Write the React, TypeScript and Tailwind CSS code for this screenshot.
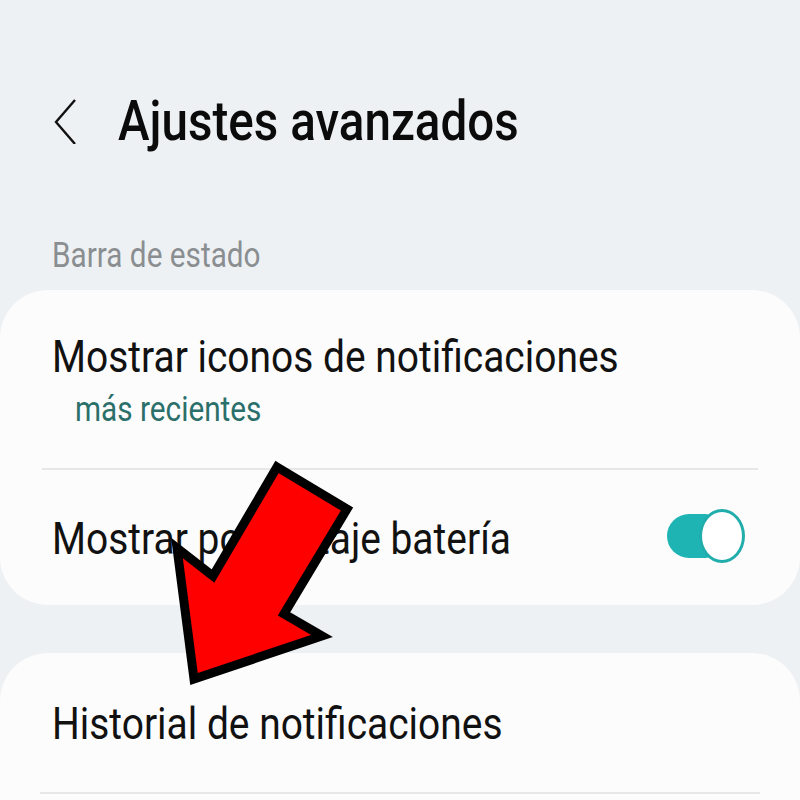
import React from "react";

export default function App() {
  return (
    <div className="relative w-[800px] h-[800px] overflow-hidden bg-[#eef1f3] font-['Roboto',sans-serif]">
      {/* Header */}
      <div className="flex items-center pt-[89px] pl-[54px] h-[153px]">
        <svg width="24" height="48" viewBox="0 0 24 48" className="shrink-0 mt-[-2px]">
          <polyline points="21,4 2,26 21,48" fill="none" stroke="#111" strokeWidth="2.4" strokeLinejoin="miter" />
        </svg>
        <div className="ml-[40px] h-[64px] leading-[64px] text-[56px] font-medium text-[#0b0b0b] whitespace-nowrap inline-block origin-left scale-x-[0.85]">
          Ajustes avanzados
        </div>
      </div>

      {/* Section label */}
      <div className="mt-[83px] pl-[52px] h-[40px] leading-[40px] text-[35px] text-[#8a8e91] whitespace-nowrap">
        <span className="inline-block origin-left scale-x-[0.85]">Barra de estado</span>
      </div>

      {/* Card 1 */}
      <div className="mt-[14px] bg-[#fcfcfc] rounded-[48px] h-[315px] flex flex-col">
        <div className="pt-[42px] pl-[52px]">
          <div className="h-[50px] leading-[50px] text-[44px] text-[#111] whitespace-nowrap">
            <span className="inline-block origin-left scale-x-[0.885]">Mostrar iconos de notificaciones</span>
          </div>
          <div className="mt-[8px] pl-[23px] h-[40px] leading-[40px] text-[35px] text-[#2b6f6a] whitespace-nowrap">
            <span className="inline-block origin-left scale-x-[0.85]">más recientes</span>
          </div>
        </div>
        <div className="mt-[38px] mx-[42px] h-[2px] bg-[#e6e7e8]" />
        <div className="flex items-center justify-between pl-[52px] pr-[55px] mt-[44px]">
          <div className="h-[50px] leading-[50px] text-[44px] text-[#111] whitespace-nowrap">
            <span className="inline-block origin-left scale-x-[0.885]">Mostrar porcentaje batería</span>
          </div>
          <div className="relative w-[78px] h-[54px] mt-[-6px]">
            <div className="absolute left-0 top-[5px] w-[60px] h-[44px] rounded-full bg-[#1fb4b4]" />
            <div className="absolute right-0 top-0 w-[46px] h-[54px] rounded-[50%] bg-white border-[3px] border-[#22adad]" />
          </div>
        </div>
      </div>

      {/* Card 2 */}
      <div className="mt-[48px] bg-[#fcfcfc] rounded-t-[48px] h-[200px] flex flex-col">
        <div className="pt-[46px] pl-[52px] h-[50px] box-content leading-[50px] text-[44px] text-[#111] whitespace-nowrap">
          <span className="inline-block origin-left scale-x-[0.885]">Historial de notificaciones</span>
        </div>
        <div className="mt-[43px] mx-[40px] h-[2px] bg-[#e6e7e8]" />
      </div>

      {/* Red arrow overlay */}
      <svg className="absolute left-0 top-0 pointer-events-none" width="800" height="800" viewBox="0 0 800 800">
        <polygon
          points="277,467 347,509 284,614 322,636 194,679 177,548 213,576"
          fill="#fe0000"
          stroke="#000"
          strokeWidth="9"
          strokeLinejoin="miter"
        />
      </svg>
    </div>
  );
}
